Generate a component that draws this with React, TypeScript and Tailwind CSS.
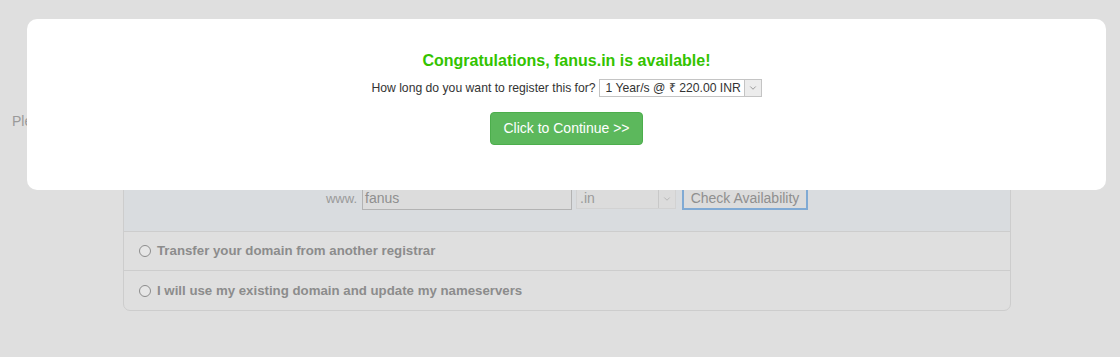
import { ChevronDown } from "lucide-react";

function Radio() {
  return <span className="inline-block w-[12px] h-[12px] rounded-full border border-[#8c8c8c] bg-[#e6e6e6] shrink-0" />;
}

export default function App() {
  return (
    <div className="relative w-[1120px] h-[357px] overflow-hidden bg-[#dfdfdf] font-['Liberation_Sans',Arial,sans-serif]">
      {/* page behind the overlay */}
      <div className="pt-[112px] pl-[12px] text-[14px] leading-[18px] text-[#9a9a9a]">
        Please enter the domain name you want to register or transfer
      </div>
      <div className="ml-[123px] mt-[10px] w-[888px] border border-[#cdcdcd] rounded-b-[7px] overflow-hidden">
        <div className="bg-[#d9dcdf] pt-[46px] pb-[21px] border-b border-[#cdcdcd] flex justify-center items-center">
          <span className="text-[13px] text-[#9a9a9a] mr-[5px]">www.</span>
          <div className="w-[210px] h-[23px] border border-[#b3b3b3] bg-[#dcdcdc] px-[2px] text-[14px] leading-[21px] text-[#8f8f8f]">
            fanus
          </div>
          <div className="ml-[4px] w-[100px] h-[21px] border border-[#d2d2d2] bg-[#dcdcdc] flex items-center justify-between">
            <span className="pl-[3px] text-[14px] text-[#9a9a9a]">.in</span>
            <span className="w-[17px] h-[19px] border-l border-[#c8c8c8] flex items-center justify-center">
              <ChevronDown className="w-[10px] h-[10px] text-[#a0a0a0]" strokeWidth={1.5} />
            </span>
          </div>
          <div className="ml-[6px] h-[23px] w-[126px] text-center border-2 border-[#80aad4] bg-[#dcdcdc] text-[14px] leading-[19px] text-[#8f8f8f]">
            Check Availability
          </div>
        </div>
        <div className="h-[39px] border-b border-[#cdcdcd] flex items-center gap-[6px] pl-[15px] text-[13.25px] font-bold text-[#8c8c8c]">
          <Radio />
          Transfer your domain from another registrar
        </div>
        <div className="h-[39px] flex items-center gap-[6px] pl-[15px] text-[13.25px] font-bold text-[#8c8c8c]">
          <Radio />
          I will use my existing domain and update my nameservers
        </div>
      </div>

      {/* modal */}
      <div className="absolute left-[27px] top-[19px] w-[1079px] h-[171px] bg-white rounded-[10px] flex flex-col items-center pt-[32px]">
        <h2 className="text-[16px] leading-[20px] font-bold text-[#33c300]">Congratulations, fanus.in is available!</h2>
        <div className="mt-[8px] flex items-center gap-[3px] text-[12.2px] text-[#333] whitespace-nowrap">
          <span>How long do you want to register this for?</span>
          <div className="h-[18px] w-[163px] border border-[#c4c4c4] flex items-center justify-between bg-white">
            <span className="pl-[6px] leading-[16px]">1 Year/s @ ₹ 220.00 INR</span>
            <span className="w-[17px] h-[16px] border-l border-[#c4c4c4] bg-[#ececec] flex items-center justify-center">
              <ChevronDown className="w-[10px] h-[10px] text-[#666]" strokeWidth={1.5} />
            </span>
          </div>
        </div>
        <button className="mt-[15px] h-[33px] w-[153px] rounded-[4px] bg-[#5cb85c] border border-[#4cae4c] text-white text-[14px]">
          Click to Continue &gt;&gt;
        </button>
      </div>
    </div>
  );
}
